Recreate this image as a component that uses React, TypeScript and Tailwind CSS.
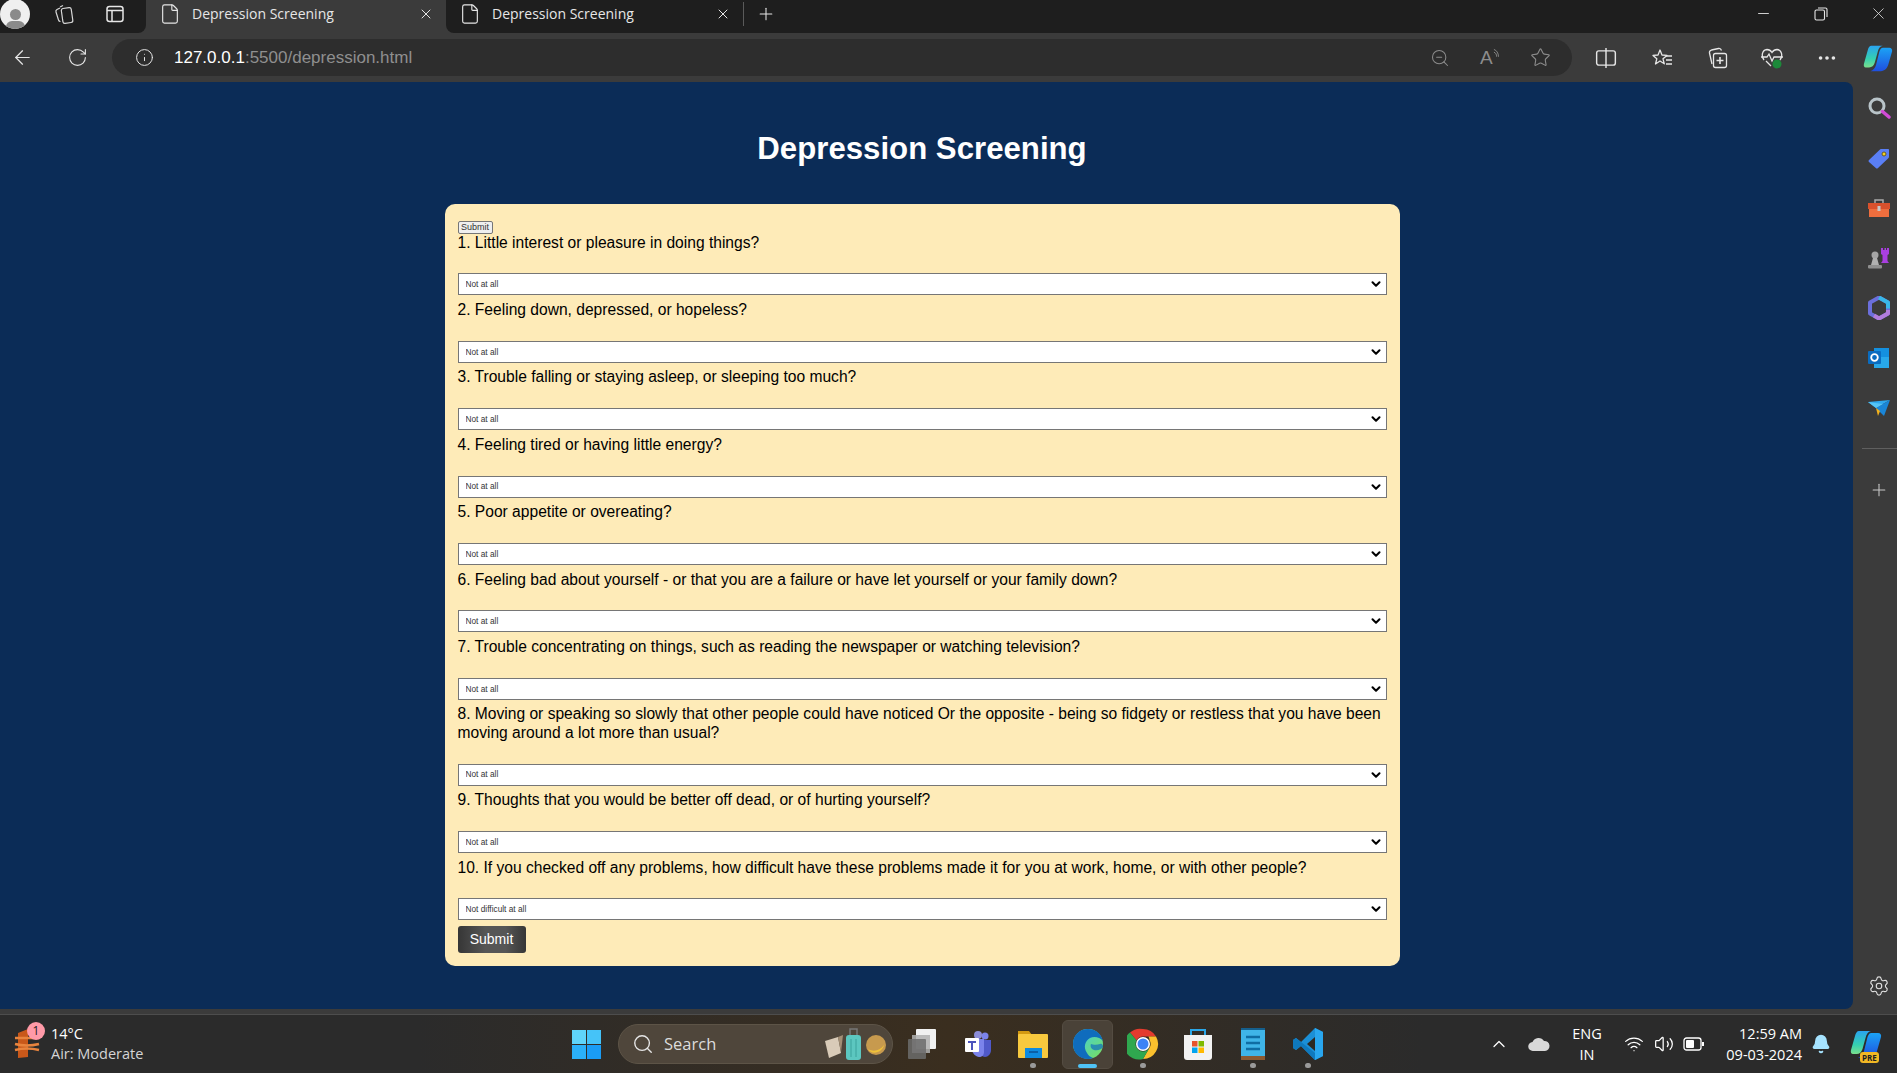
import React from "react"
import {
  ArrowLeft, RotateCw, Info, ZoomOut, Star, X, Plus, File, Ellipsis, Settings,
  ChevronUp, ChevronDown, Wifi, Volume2, Bell, Search, Minus,
} from "lucide-react"

const questions = [
  "1. Little interest or pleasure in doing things?",
  "2. Feeling down, depressed, or hopeless?",
  "3. Trouble falling or staying asleep, or sleeping too much?",
  "4. Feeling tired or having little energy?",
  "5. Poor appetite or overeating?",
  "6. Feeling bad about yourself - or that you are a failure or have let yourself or your family down?",
  "7. Trouble concentrating on things, such as reading the newspaper or watching television?",
  "8. Moving or speaking so slowly that other people could have noticed Or the opposite - being so fidgety or restless that you have been moving around a lot more than usual?",
  "9. Thoughts that you would be better off dead, or of hurting yourself?",
  "10. If you checked off any problems, how difficult have these problems made it for you at work, home, or with other people?",
]

function CopilotIcon({ size = 30, id }: { size?: number; id: string }) {
  return (
    <svg width={size} height={size} viewBox="0 0 32 32">
      <defs>
        <linearGradient id={id + "a"} x1="0" y1="0" x2="0" y2="1">
          <stop offset="0" stopColor="#2aa4f0" />
          <stop offset="0.6" stopColor="#35d0b0" />
          <stop offset="1" stopColor="#7adf8c" />
        </linearGradient>
        <linearGradient id={id + "b"} x1="0" y1="0" x2="0" y2="1">
          <stop offset="0" stopColor="#1ba3f5" />
          <stop offset="1" stopColor="#1f4fe0" />
        </linearGradient>
      </defs>
      <path d="M9 3h12c-3 .5-4.500 3-5.500 7l-3 11c-1 3-3 5-6 5H3c-2 0-2.500-2-2-4L5 8c.7-3 2-5 4-5z" fill={"url(#" + id + "a)"} />
      <path d="M21 5h7c2.500 0 3.500 2 3 4l-4 14c-1 4-4 7-8 7H8c3-1 5-3 6-7l3-12c.7-3 2-6 4-6z" fill={"url(#" + id + "b)"} />
    </svg>
  )
}

function SidebarIcons() {
  return (
    <>
      <svg width="24" height="24" viewBox="0 0 24 24">
        <circle cx="10" cy="10" r="7" fill="none" stroke="#b9c4c9" strokeWidth="3" />
        <path d="M15.500 15.500 22 21" stroke="#d14bd6" strokeWidth="3.500" strokeLinecap="round" />
      </svg>
      <svg width="24" height="24" viewBox="0 0 24 24">
        <path d="M2 14 13 3.500c.5-.5 1-.5 2-.5h6c.7 0 1 .4 1 1v6c0 1 0 1.500-.7 2.200L11 22c-.7.700-1.500.700-2.200 0L2 16c-.6-.7-.6-1.400 0-2z" fill="#5a7ff5" />
        <circle cx="17" cy="8" r="2" fill="#f4d21f" stroke="#6a5a20" />
      </svg>
      <svg width="24" height="24" viewBox="0 0 24 24">
        <path d="M8 7V4h8v3" fill="none" stroke="#aaa" strokeWidth="1.500" />
        <rect x="1" y="7" width="22" height="6" fill="#d9512c" />
        <rect x="2" y="13" width="20" height="8" fill="#ee6e3e" />
        <rect x="10.500" y="10" width="3" height="5" fill="#c7c7c7" />
      </svg>
      <svg width="24" height="24" viewBox="0 0 24 24">
        <circle cx="8" cy="9" r="3.500" fill="#a5a5a5" />
        <path d="M6 12h4l2 7H4z" fill="#b0b0b0" />
        <rect x="1" y="19" width="14" height="3.500" rx="1" fill="#8f8f8f" />
        <path d="M14 2h2v2h1.500V2h1.500v2h1V2h2v6l-1.500 1v6l1.500 2H14l1.500-2V9L14 8z" fill="#a93fe0" />
      </svg>
      <svg width="24" height="24" viewBox="0 0 24 24">
        <path d="M12 1.500 21 6.500v11L12 22.500 3 17.500v-11z" fill="none" stroke="#6b6fdc" strokeWidth="4" strokeLinejoin="round" />
        <path d="M12 1.500 21 6.500v6" fill="none" stroke="#38b7e8" strokeWidth="4" strokeLinejoin="round" />
        <path d="M21 14v3.500L12 22.500 7 19.500" fill="none" stroke="#b27ddc" strokeWidth="4" strokeLinejoin="round" />
      </svg>
      <svg width="24" height="24" viewBox="0 0 24 24">
        <rect x="7" y="2" width="15" height="10" fill="#1490df" />
        <path d="M7 11h15v11H7z" fill="#28a8ea" />
        <rect x="1" y="5" width="13" height="13" rx="1" fill="#0a6cc0" />
        <circle cx="7.500" cy="11.500" r="3.300" fill="none" stroke="#fff" strokeWidth="1.800" />
      </svg>
      <svg width="24" height="24" viewBox="0 0 24 24">
        <path d="M1 6 23 4 9 12z" fill="#2fa8ee" />
        <path d="M23 4 17 20 9 12z" fill="#1a86d8" />
        <path d="M9 12 11 20 13 15z" fill="#f5b21c" />
        <path d="M1 6 9 12 16 8z" fill="#55c4f5" />
      </svg>
    </>
  )
}

function WindowsLogo() {
  return (
    <div className="grid grid-cols-2 gap-[1px] w-[29px] h-[29px]">
      <div className="bg-[#5fd4fa]" />
      <div className="bg-[#45c3f8]" />
      <div className="bg-[#2bb0f8]" />
      <div className="bg-[#1a9cf5]" />
    </div>
  )
}

function TaskbarIcon({ children, dot, active }: { children: React.ReactNode; dot?: boolean; active?: boolean }) {
  return (
    <div className="w-[55px] h-[49px] relative flex items-center justify-center">
      {active && <div className="absolute inset-x-[2px] inset-y-0 rounded-md bg-[#4a4238] border border-[#544c42]" />}
      <div className="relative">{children}</div>
      {dot && <div className="absolute bottom-[1px] left-[25px] w-[6px] h-[5px] rounded-full bg-[#9a9a9a]" />}
      {active && <div className="absolute bottom-[1px] left-[18px] w-[19px] h-[4px] rounded-full bg-[#4fc3f7]" />}
    </div>
  )
}

function AppIcons() {
  return (
    <>
      <TaskbarIcon>
        <svg width="32" height="32" viewBox="0 0 32 32">
          <rect x="9" y="1" width="20" height="20" rx="1" fill="#f1f1f1" />
          <rect x="5" y="7" width="18" height="18" fill="#b0b0b0" fillOpacity="0.85" />
          <rect x="1" y="11" width="18" height="20" rx="1" fill="#6c6c6c" fillOpacity="0.85" />
        </svg>
      </TaskbarIcon>
      <TaskbarIcon>
        <svg width="30" height="30" viewBox="0 0 30 30">
          <circle cx="22" cy="7" r="3.500" fill="#7b83eb" />
          <path d="M17 11h11v10c0 4-3 7-6 7s-5-3-5-6z" fill="#5059c9" />
          <circle cx="15" cy="6" r="4" fill="#8b8cd8" />
          <path d="M9 10h12v13c0 3-2 5-5 5s-7-4-7-7z" fill="#7b83eb" />
          <rect x="2" y="9" width="14" height="14" rx="1" fill="#fff" />
          <path d="M5 12h8v2h-3v7H8v-7H5z" fill="#4b53bc" />
        </svg>
      </TaskbarIcon>
      <TaskbarIcon dot>
        <svg width="32" height="32" viewBox="0 0 32 32">
          <path d="M1 3h11l3 4h-14z" fill="#d39a12" />
          <rect x="1" y="6" width="30" height="24" rx="1" fill="#f8c93e" />
          <rect x="8" y="20" width="17" height="10" fill="#0f8be0" />
          <rect x="12" y="23" width="9" height="2" fill="#0a5fa8" />
        </svg>
      </TaskbarIcon>
      <TaskbarIcon active>
        <svg width="32" height="32" viewBox="0 0 32 32">
          <defs>
            <linearGradient id="edg" x1="0" y1="0" x2="1" y2="1">
              <stop offset="0" stopColor="#37c9f2" />
              <stop offset="1" stopColor="#7be05a" />
            </linearGradient>
          </defs>
          <circle cx="16" cy="16" r="15" fill="url(#edg)" />
          <path d="M1 16C1 7 8 1 16 1c7 0 13 4 15 12-3-4-9-5-13-3-5 3-7 9-3 15 1 2 3 4 6 5-2 .7-3.500 1-5 1C8 31 1 25 1 16z" fill="#0f6cbd" />
          <path d="M31 19c-1 2-5 4-9 3-3-1-4-4-3-6 2 .8 6 1 9 0 1.500-.4 2.600-.5 3 3z" fill="#0f6cbd" fillOpacity="0.7" />
        </svg>
      </TaskbarIcon>
      <TaskbarIcon dot>
        <svg width="32" height="32" viewBox="0 0 32 32">
          <path d="M16 1a15 15 0 0 1 13 7.500H16a7.500 7.500 0 0 0-6.500 3.800L3 4.500A15 15 0 0 1 16 1z" fill="#e33b2e" />
          <path d="M29 8.500A15 15 0 0 1 16 31l6.500-11.200a7.500 7.500 0 0 0 0-7.800 7.500 7.500 0 0 0-1-3.500z" fill="#fbc02d" />
          <path d="M3 4.500l6.500 7.800a7.500 7.500 0 0 0 6.500 11.200 7.500 7.500 0 0 0 6.500-3.700L16 31A15 15 0 0 1 3 4.500z" fill="#2fa84f" />
          <circle cx="16" cy="16" r="7" fill="#fff" />
          <circle cx="16" cy="16" r="5.500" fill="#3b82f6" />
        </svg>
      </TaskbarIcon>
      <TaskbarIcon>
        <svg width="32" height="34" viewBox="0 0 32 34">
          <path d="M9 8V3h14v5" fill="none" stroke="#2ba7e8" strokeWidth="2" />
          <path d="M2 8h28v22a3 3 0 0 1-3 3H5a3 3 0 0 1-3-3z" fill="#f2f2f2" />
          <rect x="10" y="14" width="5.500" height="5.500" fill="#e8532b" />
          <rect x="16.500" y="14" width="5.500" height="5.500" fill="#7fba00" />
          <rect x="10" y="20.500" width="5.500" height="5.500" fill="#01a4ef" />
          <rect x="16.500" y="20.500" width="5.500" height="5.500" fill="#ffb900" />
        </svg>
      </TaskbarIcon>
      <TaskbarIcon dot>
        <svg width="28" height="34" viewBox="0 0 28 34">
          <rect x="2" y="2" width="24" height="30" fill="#3fb5e8" />
          <rect x="2" y="29" width="24" height="4" fill="#8a5a32" />
          <path d="M2 1h24v2H2z" fill="#155f8c" />
          <path d="M7 10h14M7 16h14M7 22h14" stroke="#0f6da3" strokeWidth="2.500" />
        </svg>
      </TaskbarIcon>
      <TaskbarIcon dot>
        <svg width="32" height="34" viewBox="0 0 32 34">
          <path d="M23 1 31 5v24l-8 4L9 19l-5 4-3-2v-8l3-2 5 4z" fill="#1b8fd6" />
          <path d="M23 1v32l8-4V5z" fill="#29a6ee" />
          <path d="M23 10v14l-8-7z" fill="#2c2822" />
          <path d="M1 13l3-2 19 15v7L9 19l-5 4-3-2z" fill="#0f79bd" />
        </svg>
      </TaskbarIcon>
    </>
  )
}

function Toolbar() {
  return (
    <div className="h-[49px] flex items-center text-[#e6e6e6]">
      <div className="w-[44px] flex justify-center">
        <ArrowLeft size={23} strokeWidth={1.25} />
      </div>
      <div className="w-[66px] flex justify-center">
        <RotateCw size={21} strokeWidth={1.25} />
      </div>
      <div className="ml-[2px] w-[1460px] shrink-0 h-[37px] rounded-full bg-[#2d2d2d] flex items-center pl-[23px] pr-[21px]">
        <Info size={19} strokeWidth={1.25} />
        <div className="ml-[20px] text-[17px]">
          <span className="text-white">127.0.0.1</span>
          <span className="text-[#8f8f8f]">:5500/depression.html</span>
        </div>
        <div className="ml-auto flex items-center gap-[30px] text-[#8c8c8c]">
          <ZoomOut size={20} strokeWidth={1.25} />
          <div className="w-[20px] flex items-start text-[19px] leading-none">
            A
            <svg width="8" height="12" viewBox="0 0 8 12" fill="none" stroke="#8c8c8c">
              <path d="M1 1c3 1 5 4 5 8M1 4c2 .7 3 2.500 3 5" />
            </svg>
          </div>
          <Star size={21} strokeWidth={1.25} />
        </div>
      </div>
      <div className="ml-[6px] flex items-center">
        <div className="w-[56px] flex justify-center">
          <svg width="22" height="22" viewBox="0 0 20 20" fill="none" stroke="#e6e6e6" strokeWidth="1.300">
            <rect x="1.500" y="3.500" width="17" height="13" rx="2" />
            <path d="M10 1v18" />
          </svg>
        </div>
        <div className="w-[55px] flex justify-center">
          <svg width="22" height="22" viewBox="0 0 22 22" fill="none" stroke="#e6e6e6" strokeWidth="1.300">
            <path d="M9 3l2 5 5 .4-4 3.400 1.300 5L9 14l-4.500 3 1.300-5.200L2 8.400 7 8z" strokeLinejoin="round" />
            <path d="M15 9h6M15 13h6M15 17h6" />
          </svg>
        </div>
        <div className="w-[55px] flex justify-center">
          <svg width="22" height="22" viewBox="0 0 22 22" fill="none" stroke="#e6e6e6" strokeWidth="1.300">
            <path d="M6 17 3.500 6c-.3-1.500.5-2.500 2-3l7-1.500c1.500-.3 2.500.5 3 2" />
            <rect x="7.500" y="6.500" width="13" height="14" rx="2" />
            <path d="M14 10v7M10.500 13.500h7" strokeWidth="1.600" />
          </svg>
        </div>
        <div className="w-[55px] flex justify-center">
          <svg width="24" height="22" viewBox="0 0 24 22" fill="none" stroke="#e6e6e6" strokeWidth="1.300">
            <path d="M4 13C1 9 2 3 7 2.500c2.500 0 4 1.500 5 3 1-1.500 2.500-3 5-3 5 .5 6 6.500 3 10.500" />
            <path d="M1 10h6l2-3 3 7 2-4h9" />
            <path d="M6 14l5 5" />
            <circle cx="17" cy="17" r="4.500" fill="#1c8a3a" stroke="none" />
          </svg>
        </div>
        <div className="w-[55px] flex justify-center">
          <Ellipsis size={22} strokeWidth={2} />
        </div>
        <div className="w-[43px] pl-[5px] flex justify-center">
          <CopilotIcon id="cpt" />
        </div>
      </div>
    </div>
  )
}

function TabStrip() {
  return (
    <div className="h-[33px] flex text-[#e6e6e6] text-[14px]">
      <div className="w-[146px] bg-[#1e1e1e] rounded-br-lg flex items-center overflow-hidden">
        <div className="w-[30px] h-[30px] rounded-full bg-[#efefef] flex flex-col items-center justify-end overflow-hidden -mt-[5px]">
          <div className="w-[11px] h-[11px] rounded-full bg-[#8a8a8a]" />
          <div className="w-[19px] h-[8px] mt-[1px] rounded-t-md bg-[#8a8a8a]" />
        </div>
        <svg className="ml-[23px] -mt-[5px]" width="22" height="22" viewBox="0 0 22 22" fill="none" stroke="#d8d8d8" strokeWidth="1.200">
          <rect x="9" y="5" width="10" height="15" rx="2" transform="rotate(-8 14 12)" />
          <path d="M7 5 4 6.500c-1 .5-1.300 1.500-1 2.500l2.500 8c.3 1 1 1.500 2 1.500" />
          <path d="M10 2.500 7 4" />
        </svg>
        <svg className="ml-[30px] -mt-[5px]" width="20" height="20" viewBox="0 0 20 20" fill="none" stroke="#e6e6e6" strokeWidth="1.500">
          <rect x="2" y="2.500" width="16" height="15" rx="2.500" />
          <path d="M2 6.500h16M7 6.500v11" />
        </svg>
      </div>
      <div className="w-[300px] flex items-center pl-[13px] pr-[12px] pb-[6px] bg-[#3b3b3b]">
        <File size={22} strokeWidth={1.25} />
        <span className="ml-[11px] font-['Open_Sans',sans-serif] text-[14px]">Depression Screening</span>
        <X className="ml-auto" size={16} strokeWidth={1.5} />
      </div>
      <div className="flex-1 bg-[#1e1e1e] rounded-bl-lg flex items-center pb-[6px]">
        <div className="w-[298px] flex items-center pl-[13px] pr-[12px] border-r border-[#5a5a5a] h-[24px]">
          <File size={22} strokeWidth={1.25} />
          <span className="ml-[11px] font-['Open_Sans',sans-serif] text-[14px]">Depression Screening</span>
          <X className="ml-auto" size={16} strokeWidth={1.5} />
        </div>
        <Plus className="ml-[12px]" size={20} strokeWidth={1.25} />
        <div className="ml-auto flex items-center">
          <div className="w-[58px] flex justify-center">
            <Minus size={17} strokeWidth={1.25} />
          </div>
          <div className="w-[58px] flex justify-center">
            <svg width="14" height="14" viewBox="0 0 14 14" fill="none" stroke="#e6e6e6" strokeWidth="1.100">
              <rect x="1" y="3" width="9.500" height="10" rx="1.500" />
              <path d="M4 1h7.500c.8 0 1.500.7 1.500 1.500V10" />
            </svg>
          </div>
          <div className="w-[47px] pl-[9px] flex justify-center">
            <X size={19} strokeWidth={1} />
          </div>
        </div>
      </div>
    </div>
  )
}

export default function App() {
  return (
    <div className="w-[1897px] h-[1073px] overflow-hidden flex flex-col bg-[#3b3b3b] font-['Liberation_Sans',Arial,sans-serif]">
      <TabStrip />
      <Toolbar />

      <div className="h-[927px] flex">
        <main className="w-[1853px] bg-[#0b2c57] rounded-tr-lg rounded-br-lg pr-[9px] pt-[48px]">
          <h1 className="text-[31.2px] leading-[37px] font-bold text-white text-center mb-[37px]">Depression Screening</h1>
          <form className="mx-auto w-[955px] rounded-[10px] bg-[#feebb8] px-[13px] pt-[17px] pb-[13px]">
            <button type="button" className="block h-[13px] w-[35px] text-[9px] leading-none text-[#333] bg-[#efefef] border border-[#767676] rounded-[2px]">
              Submit
            </button>
            {questions.map((q, i) => (
              <div key={q}>
                <label className="block text-[15.6px] leading-[18.4px] text-black mb-[21.5px] mt-[-0.500px]">{q}</label>
                <div className="relative mb-[6px]">
                  <select className="block w-full h-[22px] appearance-none bg-white border border-[#767676] pl-[7px] text-[8.3px] text-[#333]">
                    <option>{i === 9 ? "Not difficult at all" : "Not at all"}</option>
                  </select>
                  <ChevronDown className="absolute right-[4px] top-[4px] text-black pointer-events-none" size={14} strokeWidth={3.5} />
                </div>
              </div>
            ))}
            <button type="button" className="block w-[68px] h-[27px] rounded-[3px] text-[14px] text-white bg-[linear-gradient(90deg,#363636,#565656_40%,#565656_70%,#363636)]">
              Submit
            </button>
          </form>
        </main>
        <aside className="flex-1 flex flex-col items-center pt-[14px] pl-[8px] gap-[26px]">
          <SidebarIcons />
          <div className="self-stretch ml-[1px] h-px bg-[#5f5f5f] mt-[2px]" />
          <Plus className="text-[#c9c9c9] mt-[5px]" size={20} strokeWidth={1.25} />
          <Settings className="mt-auto mb-[12px] text-[#e0e0e0]" size={22} strokeWidth={1.25} />
        </aside>
      </div>

      <footer className="h-[59px] mt-auto flex items-center border-t border-[#4d4d4d] text-white bg-[linear-gradient(90deg,#2b2b2b_0%,#2b2b2b_22%,#3a2e1f_50%,#2b2b2b_75%)]">
        <div className="w-[572px] flex items-center pl-[14px]">
          <div className="relative w-[37px] h-[34px]">
            <svg width="26" height="34" viewBox="0 0 26 34">
              <path d="M4 6 14 2v28L4 31z" fill="#c9581a" />
              <path d="M1 11h24M1 17c8 2 16 2 24 0M1 23c8-2 16-2 24 0" stroke="#e8843e" strokeWidth="2.500" fill="none" />
            </svg>
            <div className="absolute left-[13px] -top-[5px] w-[18px] h-[18px] rounded-full bg-[#ff9aa8] text-[#222] text-[12px] flex items-center justify-center font-['Open_Sans',sans-serif]">
              1
            </div>
          </div>
          <div className="font-['Open_Sans',sans-serif] text-[14.5px] leading-[20px]">
            <div>14°C</div>
            <div className="text-[#d5d5d5]">Air: Moderate</div>
          </div>
        </div>
        <WindowsLogo />
        <div className="ml-[17px] w-[275px] h-[40px] rounded-full bg-[#4f463b] border border-[#5d5447] flex items-center pl-[13px]">
          <Search size={22} strokeWidth={1.5} className="text-[#e6e6e6]" />
          <span className="ml-[10px] text-[16.500px] text-[#dcdcdc] font-['Open_Sans',sans-serif]">Search</span>
          <svg className="ml-auto" width="68" height="34" viewBox="0 0 68 34">
            <path d="M1 14 14 10l3 16-12 5z" fill="#d9cbb8" />
            <path d="M14 10 19 8l-2 17z" fill="#a38f76" />
            <rect x="22" y="8" width="15" height="25" rx="3" fill="#5cc7c0" />
            <path d="M26 8V2h7v6" fill="none" stroke="#777" strokeWidth="1.500" />
            <path d="M27 12v18M32 12v18" stroke="#3aa29c" />
            <circle cx="52" cy="18" r="10" fill="#c79a4e" />
            <path d="M44 22c5 3 12 2 16-4-1 7-12 11-16 4z" fill="#f0c23a" />
          </svg>
        </div>
        <div className="ml-[2px] flex items-center">
          <AppIcons />
        </div>
        <div className="ml-[150px] flex items-center font-['Open_Sans',sans-serif] text-[14.5px]">
          <div className="w-[28px] flex justify-center">
            <ChevronUp size={20} strokeWidth={1.5} />
          </div>
          <div className="w-[52px] flex justify-center">
            <svg width="22" height="16" viewBox="0 0 22 16">
              <path d="M5 15a4.500 4.500 0 0 1-.5-9A6.500 6.500 0 0 1 16 5a5 5 0 0 1 1 10z" fill="#d8d8d8" />
            </svg>
          </div>
          <div className="w-[44px] text-center leading-[21px]">
            <div>ENG</div>
            <div>IN</div>
          </div>
          <div className="ml-[10px] w-[30px] flex justify-center">
            <Wifi size={20} strokeWidth={1.5} />
          </div>
          <div className="w-[30px] flex justify-center">
            <Volume2 size={20} strokeWidth={1.5} />
          </div>
          <div className="w-[30px] flex justify-center">
            <svg width="22" height="16" viewBox="0 0 22 16" fill="none" stroke="#fff" strokeWidth="1.300">
              <rect x="1" y="2" width="17" height="12" rx="2.500" />
              <rect x="3" y="4" width="8" height="8" rx="1" fill="#fff" stroke="none" />
              <path d="M20 6v4" strokeWidth="2" />
            </svg>
          </div>
          <div className="w-[93px] text-right leading-[21px]">
            <div>12:59 AM</div>
            <div>09-03-2024</div>
          </div>
          <div className="w-[38px] flex justify-center">
            <Bell size={20} className="text-[#a6e3ff] fill-[#a6e3ff]" />
          </div>
          <div className="w-[52px] relative flex justify-center">
            <CopilotIcon id="cpb" size={32} />
            <div className="absolute left-[20px] -bottom-[3px] bg-[#f2b824] rounded-[3px] text-[8px] leading-[11px] font-bold text-[#222] px-[2px]">
              PRE
            </div>
          </div>
        </div>
      </footer>
    </div>
  )
}
